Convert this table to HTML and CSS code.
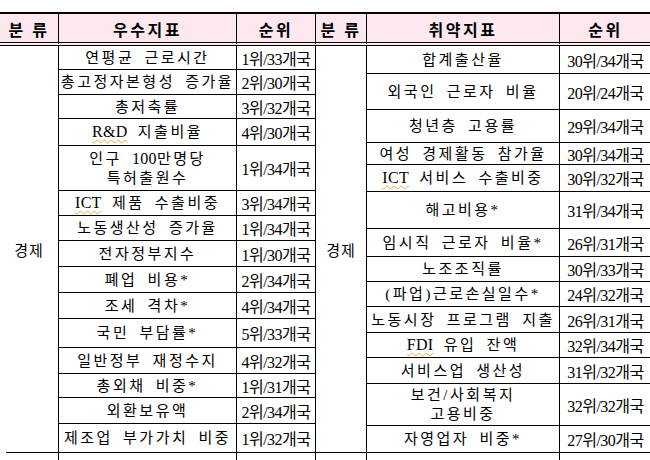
FILE: index.html
```html
<!DOCTYPE html>
<html lang="ko">
<head>
<meta charset="utf-8">
<title>우수지표 / 취약지표</title>
<link rel="stylesheet" href="styles.css">
</head>
<body>
<div class="sheet">
  <div class="grid left">
    <div class="th"><span>분 류</span></div>
    <div class="th"><span>우수지표</span></div>
    <div class="th"><span>순위</span></div>
    <div class="cat cat-left"><span>경제</span></div>
    <div class="ind"><span>연평균 근로시간</span></div><div class="rank"><span>1위/33개국</span></div>
    <div class="ind"><span>총고정자본형성 증가율</span></div><div class="rank"><span>2위/30개국</span></div>
    <div class="ind"><span>총저축률</span></div><div class="rank"><span>3위/32개국</span></div>
    <div class="ind"><span><span class="lat sq">R&amp;D</span> 지출비율</span></div><div class="rank"><span>4위/30개국</span></div>
    <div class="ind two"><span>인구 <span class="lat">100</span>만명당<br>특허출원수</span></div><div class="rank"><span>1위/34개국</span></div>
    <div class="ind"><span><span class="lat sq">ICT</span> 제품 수출비중</span></div><div class="rank"><span>3위/34개국</span></div>
    <div class="ind"><span>노동생산성 증가율</span></div><div class="rank"><span>1위/34개국</span></div>
    <div class="ind"><span>전자정부지수</span></div><div class="rank"><span>1위/30개국</span></div>
    <div class="ind"><span>폐업 비용*</span></div><div class="rank"><span>2위/34개국</span></div>
    <div class="ind"><span>조세 격차*</span></div><div class="rank"><span>4위/34개국</span></div>
    <div class="ind"><span>국민 부담률*</span></div><div class="rank"><span>5위/33개국</span></div>
    <div class="ind"><span>일반정부 재정수지</span></div><div class="rank"><span>4위/32개국</span></div>
    <div class="ind"><span>총외채 비중*</span></div><div class="rank"><span>1위/31개국</span></div>
    <div class="ind"><span>외환보유액</span></div><div class="rank"><span>2위/34개국</span></div>
    <div class="ind"><span>제조업 부가가치 비중</span></div><div class="rank"><span>1위/32개국</span></div>
    <div class="next"></div><div class="next"></div><div class="next"></div>
  </div>
  <div class="grid right">
    <div class="th"><span>분 류</span></div>
    <div class="th"><span>취약지표</span></div>
    <div class="th"><span>순위</span></div>
    <div class="cat cat-right"><span>경제</span></div>
    <div class="ind"><span>합계출산율</span></div><div class="rank"><span>30위/34개국</span></div>
    <div class="ind"><span>외국인 근로자 비율</span></div><div class="rank"><span>20위/24개국</span></div>
    <div class="ind"><span>청년층 고용률</span></div><div class="rank"><span>29위/34개국</span></div>
    <div class="ind"><span>여성 경제활동 참가율</span></div><div class="rank"><span>30위/34개국</span></div>
    <div class="ind"><span><span class="lat sq">ICT</span> 서비스 수출비중</span></div><div class="rank"><span>30위/32개국</span></div>
    <div class="ind"><span>해고비용*</span></div><div class="rank"><span>31위/34개국</span></div>
    <div class="ind"><span>임시직 근로자 비율*</span></div><div class="rank"><span>26위/31개국</span></div>
    <div class="ind"><span>노조조직률</span></div><div class="rank"><span>30위/33개국</span></div>
    <div class="ind"><span>(파업)근로손실일수*</span></div><div class="rank"><span>24위/32개국</span></div>
    <div class="ind"><span>노동시장 프로그램 지출</span></div><div class="rank"><span>26위/31개국</span></div>
    <div class="ind"><span><span class="lat sq">FDI</span> 유입 잔액</span></div><div class="rank"><span>32위/34개국</span></div>
    <div class="ind"><span>서비스업 생산성</span></div><div class="rank"><span>31위/32개국</span></div>
    <div class="ind two"><span>보건/사회복지<br>고용비중</span></div><div class="rank"><span>32위/32개국</span></div>
    <div class="ind"><span>자영업자 비중*</span></div><div class="rank"><span>27위/30개국</span></div>
    <div class="next"></div><div class="next"></div><div class="next"></div>
  </div>
</div>
</body>
</html>
```

FILE: styles.css
```css
html, body {
  margin: 0;
  padding: 0;
  background: #ffffff;
  width: 650px;
  height: 460px;
  overflow: hidden;
}

body {
  font-family: "Liberation Serif", "Noto Sans CJK KR", serif;
  color: #000000;
}

.sheet {
  display: flex;
  margin-top: 12px;
  width: 652px;
  border-top: 2px solid #000000;
}

.grid {
  display: grid;
}

.left {
  grid-template-columns: 59px 178px 79px;
  grid-template-rows: 32px 24px 25px 24px 27px 45px 25px 25px 26px 26px 26px 29px 26px 24px 26px 29px 30px;
}

.right {
  grid-template-columns: 51px 193px 92px;
  grid-template-rows: 32px 28px 36px 33px 22px 27px 37px 28px 25px 25px 26px 25px 26px 42px 27px 30px;
}

.grid > div {
  box-sizing: border-box;
  display: flex;
  align-items: center;
  justify-content: center;
  text-align: center;
  border-right: 1px solid #000000;
  border-bottom: 1px solid #000000;
  white-space: nowrap;
}

.th {
  background: #fde8f0;
  border-bottom: 4px double #000000 !important;
  font-weight: 700;
  font-size: 16px;
  letter-spacing: 2.5px;
  padding-top: 1px;
}

.cat {
  font-size: 15px;
  letter-spacing: 1px;
}

.cat-left {
  grid-row: 2 / span 15;
}

.grid > .cat-left {
  border-bottom: none;
  background: linear-gradient(#000000, #000000) no-repeat 6px 100% / calc(100% - 6px) 1px;
}

.cat-right {
  grid-row: 2 / span 14;
}

.ind {
  font-size: 15px;
  letter-spacing: 2.5px;
  word-spacing: 4px;
  line-height: 18px;
}

.ind.two {
  line-height: 19px;
}

.lat {
  font-size: 16px;
  letter-spacing: 0.3px;
}

.rank {
  font-size: 16px;
  letter-spacing: -0.5px;
}

.sq {
  text-decoration: underline wavy #eda33c;
  text-decoration-thickness: 1px;
  text-underline-offset: 2px;
}

.grid > .next {
  border-bottom: none;
}
```
